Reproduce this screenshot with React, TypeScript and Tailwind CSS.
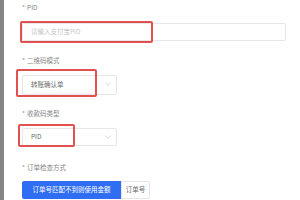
import React from "react";

const font = { fontFamily: '"Noto Sans CJK SC", "Noto Sans", sans-serif' };

function Label({ text }: { text: string }) {
  return (
    <div className="h-[10px] flex items-center text-[6.5px] leading-[10px] text-[#888888]">
      <span className="mr-[2px] text-[#909090]">*</span>
      <span>{text}</span>
    </div>
  );
}

function Chevron() {
  return (
    <svg width="6" height="4" viewBox="0 0 6 4" className="absolute right-[6px] top-[7px]">
      <path d="M0.5 0.8 L3 3.2 L5.5 0.8" fill="none" stroke="#c4c4c4" strokeWidth="0.7" />
    </svg>
  );
}

export default function App() {
  return (
    <div className="w-[300px] h-[200px] bg-white flex overflow-hidden" style={font}>
      <div className="w-[4px] h-full bg-[#858585] shrink-0" />
      <div className="flex flex-col pl-[18px] pt-[2px] w-full">
        <Label text="PID" />
        <div className="relative mt-[11px] h-[18px] w-[264px]">
          <div className="h-full w-full border border-[#e6e6e6] rounded-[2px] flex items-center pl-[8px] text-[6.5px] text-[#c6c6c6]">
            请输入支付宝PID
          </div>
          <div className="absolute left-[-2px] top-[-2px] w-[133px] h-[22px] border-2 border-[#e2504f] rounded-[2px]" />
        </div>
        <div className="mt-[14px]">
          <Label text="二维码模式" />
        </div>
        <div className="relative mt-[10px] h-[20px] w-[95px]">
          <div className="h-full w-full border border-[#e6e6e6] rounded-[2px] flex items-center pl-[8px] text-[6.5px] text-[#6a6a6a]">
            转账确认单
          </div>
          <Chevron />
          <div className="absolute left-[-6px] top-[-6px] w-[81px] h-[28px] border-2 border-[#e2504f] rounded-[2px]" />
        </div>
        <div className="mt-[13px]">
          <Label text="收款码类型" />
        </div>
        <div className="relative mt-[10px] h-[18px] w-[95px]">
          <div className="h-full w-full border border-[#e6e6e6] rounded-[2px] flex items-center pl-[8px] text-[6.5px] text-[#6a6a6a]">
            PID
          </div>
          <Chevron />
          <div className="absolute left-[-4px] top-[-4px] w-[57px] h-[23px] border-2 border-[#e2504f] rounded-[2px]" />
        </div>
        <div className="mt-[16px]">
          <Label text="订单检查方式" />
        </div>
        <div className="mt-[9px] flex h-[18px]">
          <div className="w-[99px] h-full bg-[#2f6ef2] rounded-l-[2px] flex items-center justify-center text-[6.5px] text-white">
            订单号匹配不到则使用金额
          </div>
          <div className="w-[29px] h-full border border-[#e6e6e6] rounded-r-[2px] flex items-center justify-center text-[6.5px] text-[#666]">
            订单号
          </div>
        </div>
      </div>
    </div>
  );
}
